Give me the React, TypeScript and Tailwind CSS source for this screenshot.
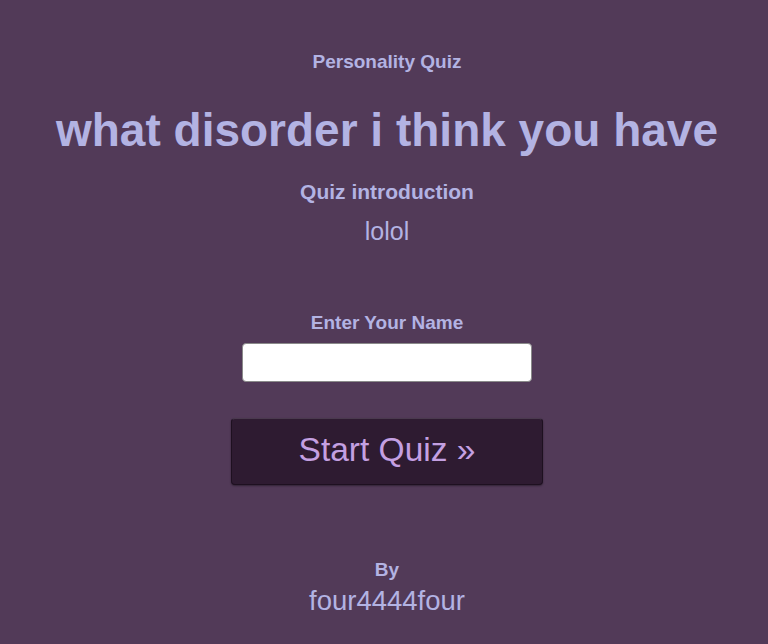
export default function App() {
  return (
    <div
      className="min-h-[644px] w-full bg-[#523a58] flex flex-col items-center pl-[6px] text-[#b3b3e3]"
      style={{ fontFamily: '"Liberation Sans", Arial, sans-serif' }}
    >
      <div className="mt-[51px] text-[19px] font-bold leading-[22px]">Personality Quiz</div>
      <h1 className="mt-[30px] text-[46px] font-bold leading-[54px]">what disorder i think you have</h1>
      <div className="mt-[23px] text-[21px] font-bold leading-[24px]">Quiz introduction</div>
      <div className="mt-[12px] text-[25px] leading-[30px]">lolol</div>
      <label className="mt-[66px] text-[19px] font-bold leading-[22px]">Enter Your Name</label>
      <input
        type="text"
        className="mt-[9px] w-[290px] h-[39px] bg-white rounded-[4px] border border-[#8a8a8a] outline-none"
      />
      <button className="mt-[36px] w-[312px] h-[67px] pb-[3px] rounded-[4px] bg-[#2e1b31] border border-[#1e1020] border-t-[#4a3a4e] text-[#c4a0e2] text-[33.5px] leading-[40px] shadow-[0_1px_2px_rgba(0,0,0,0.4)]">
        Start Quiz »
      </button>
      <div className="mt-[74px] text-[19px] font-bold leading-[22px]">By</div>
      <div className="mt-[4px] text-[27.5px] leading-[32px]">four4444four</div>
    </div>
  );
}
